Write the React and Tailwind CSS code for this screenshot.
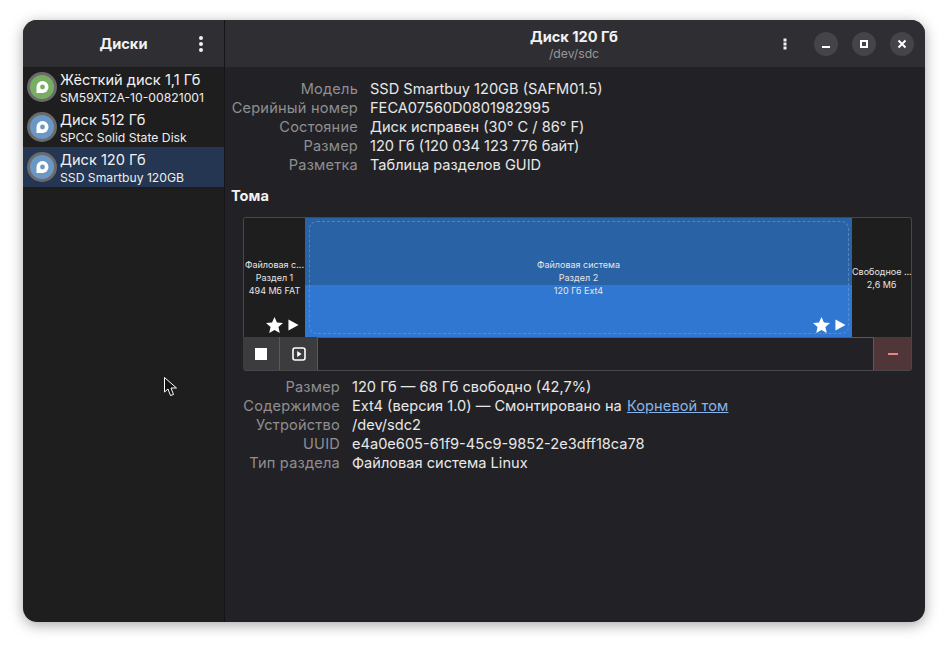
// App.jsx
// Disks window, dark theme

function DiskIcon({ color }) {
  return (
    <svg width="30" height="30" viewBox="0 0 30 30" className="shrink-0">
      <circle cx="15" cy="15" r="15" fill="#6b6b6b" />
      <circle cx="15" cy="15" r="12" fill={color} />
      <path d="M15.5 9a6 6 0 0 1 0 12H9.5v-6a6 6 0 0 1 6-6z" fill="#fff" />
      <circle cx="15.5" cy="15" r="2.4" fill={color} />
    </svg>
  );
}

function DiskRow({ name, model, color, selected }) {
  return (
    <div className={`flex h-10 items-center gap-[3px] pl-[4px] ${selected ? 'bg-[#243651]' : ''}`}>
      <DiskIcon color={color} />
      <div className="flex flex-col">
        <span className="text-[14.6px] leading-[20px] text-[#f2f2f2]">{name}</span>
        <span className="text-[12.2px] leading-[15px] text-[#eeeeee]">{model}</span>
      </div>
    </div>
  );
}

function InfoRows({ rows, labelWidth }) {
  return (
    <div className="grid gap-x-3" style={{ gridTemplateColumns: `${labelWidth}px 1fr` }}>
      {rows.map(([label, value]) => (
        <div key={label} className="contents">
          <span className="h-[19px] whitespace-nowrap text-right text-[14.6px] leading-[19px] tracking-[0.2px] text-[#8f8f91]">{label}</span>
          <span className="h-[19px] text-[14.6px] leading-[19px] text-[#e8e8e8]">{value}</span>
        </div>
      ))}
    </div>
  );
}

function WinButton({ children }) {
  return (
    <div className="flex h-6 w-6 items-center justify-center rounded-full bg-[#454549]">
      {children}
    </div>
  );
}

function StarPlay() {
  return (
    <div className="absolute bottom-[4px] right-[6px] flex items-center gap-[5px]">
      <svg width="17" height="16" viewBox="0 0 18 17">
        <path d="M9 0l2.6 5.8 6.4.7-4.8 4.2 1.4 6.3L9 13.8 3.4 17l1.4-6.3L0 6.5l6.4-.7z" fill="#fff" />
      </svg>
      <svg width="11" height="12" viewBox="0 0 12 13">
        <path d="M0.5 0.5L11.5 6.5L0.5 12.5z" fill="#fff" />
      </svg>
    </div>
  );
}

function SegLabel({ lines }) {
  return (
    <div className="flex w-full flex-col items-center text-center text-[9px] leading-[13px] text-[#e6e6e6]">
      {lines.map((l) => (
        <span key={l} className="block w-full whitespace-nowrap">{l}</span>
      ))}
    </div>
  );
}

export default function App() {
  return (
    <div className="relative h-[648px] w-[948px] overflow-hidden bg-white pl-[23px] pt-[20px] font-['Inter',sans-serif]">
      <div className="flex h-[602px] w-[902px] overflow-hidden rounded-[14px] shadow-[0_3px_14px_rgba(0,0,0,0.35)]">
        {/* Sidebar */}
        <div className="flex w-[202px] shrink-0 flex-col border-r border-[#151517] bg-[#1e1e1f]">
          <div className="relative flex h-[47px] shrink-0 items-center justify-center bg-[#2f2f33] pt-[2px]">
            <span className="text-[14.6px] font-bold text-[#f2f2f2]">Диски</span>
            <svg width="4" height="16" viewBox="0 0 4 16" className="absolute left-[176px] top-[16px]">
              <circle cx="2" cy="2" r="2" fill="#f0f0f0" />
              <circle cx="2" cy="8" r="2" fill="#f0f0f0" />
              <circle cx="2" cy="14" r="2" fill="#f0f0f0" />
            </svg>
          </div>
          <div className="flex flex-col">
            <DiskRow name="Жёсткий диск 1,1 Гб" model="SM59XT2A-10-00821001" color="#78ae64" />
            <DiskRow name="Диск 512 Гб" model="SPCC Solid State Disk" color="#6b97c4" />
            <DiskRow name="Диск 120 Гб" model="SSD Smartbuy 120GB" color="#6b97c4" selected />
          </div>
        </div>

        {/* Main */}
        <div className="flex min-w-0 flex-1 flex-col bg-[#222226]">
          <div className="relative flex h-[47px] shrink-0 flex-col items-center justify-center bg-[#2f2f33] pr-[2px] pt-[1px]">
            <span className="text-[14.6px] font-bold leading-[18px] text-[#f2f2f2]">Диск 120 Гб</span>
            <span className="text-[12.2px] leading-[15px] text-[#98989a]">/dev/sdc</span>
            <div className="absolute right-[11px] top-[12px] flex items-center gap-[14px]">
              <svg width="4" height="12" viewBox="0 0 4 12" className="mr-[13px]">
                <rect x="0.5" y="0.5" width="3" height="3" fill="#f0f0f0" />
                <rect x="0.5" y="4.5" width="3" height="3" fill="#f0f0f0" />
                <rect x="0.5" y="8.5" width="3" height="3" fill="#f0f0f0" />
              </svg>
              <WinButton>
                <div className="mt-[5px] h-[2px] w-2 bg-white" />
              </WinButton>
              <WinButton>
                <div className="h-2 w-2 border-2 border-white" />
              </WinButton>
              <WinButton>
                <svg width="10" height="10" viewBox="0 0 10 10">
                  <path d="M1.5 1.5l7 7M8.5 1.5l-7 7" stroke="#fff" strokeWidth="2" />
                </svg>
              </WinButton>
            </div>
          </div>

          <div className="flex flex-col pl-[6px] pr-[13px] pt-[13px]">
            <InfoRows
              labelWidth={127}
              rows={[
                ['Модель', 'SSD Smartbuy 120GB (SAFM01.5)'],
                ['Серийный номер', 'FECA07560D0801982995'],
                ['Состояние', 'Диск исправен (30° C / 86° F)'],
                ['Размер', '120 Гб (120 034 123 776 байт)'],
                ['Разметка', 'Таблица разделов GUID'],
              ]}
            />

            <div className="mt-[12px] h-[19px] text-[14.6px] font-bold leading-[19px] text-[#f2f2f2]">Тома</div>

            {/* Volume map */}
            <div className="ml-[12px] mt-[11px] flex flex-col">
              <div className="flex h-[120px] overflow-hidden rounded-t-[3px] border-x border-t border-[#47474a]">
                <div className="relative flex w-[61px] shrink-0 items-center bg-[#1e1e1f]">
                  <SegLabel lines={['Файловая с...', 'Раздел 1', '494 Мб FAT']} />
                  <StarPlay />
                </div>
                <div className="relative flex flex-1 items-center bg-[#2f77d1]">
                  <div className="absolute inset-x-0 top-0 h-[67px] bg-[#2a62a6]" />
                  <div className="absolute bottom-[3px] left-[4px] right-[3px] top-[3px] rounded-[8px] border border-dashed border-[#7aa6da]/50" />
                  <div className="relative w-full">
                    <SegLabel lines={['Файловая система', 'Раздел 2', '120 Гб Ext4']} />
                  </div>
                  <StarPlay />
                </div>
                <div className="flex w-[59px] shrink-0 items-center bg-[#1e1e1f]">
                  <SegLabel lines={['Свободное ...', '2,6 Мб']} />
                </div>
              </div>
              <div className="flex h-[34px] overflow-hidden rounded-b-[3px] border-b border-[#47474a]">
                <div className="flex w-[37px] items-center justify-center border-r border-[#5a5a5c] bg-[#3c3c3f]">
                  <div className="h-3 w-3 bg-white" />
                </div>
                <div className="flex w-[37px] items-center justify-center bg-[#3c3c3f]">
                  <svg width="14" height="14" viewBox="0 0 14 14">
                    <rect x="1" y="1" width="12" height="12" rx="2" fill="none" stroke="#fff" strokeWidth="1.6" />
                    <path d="M5.2 4l4.4 3-4.4 3z" fill="#fff" />
                  </svg>
                </div>
                <div className="flex-1 border-l border-t border-r border-[#5a5a5c] bg-[#222226]" />
                <div className="flex w-[38px] items-center justify-center border-r border-[#47474a] bg-[#503638]">
                  <div className="h-[2px] w-[10px] bg-[#e5848a]" />
                </div>
              </div>
            </div>

            <div className="ml-[12px] mt-[7px]">
              <InfoRows
                labelWidth={97}
                rows={[
                  ['Размер', '120 Гб — 68 Гб свободно (42,7%)'],
                  [
                    'Содержимое',
                    <>
                      Ext4 (версия 1.0) — Смонтировано на{' '}
                      <span className="ml-[1px] tracking-[0.1px] text-[#8ab4e8] underline">Корневой том</span>
                    </>,
                  ],
                  ['Устройство', '/dev/sdc2'],
                  ['UUID', 'e4a0e605-61f9-45c9-9852-2e3dff18ca78'],
                  ['Тип раздела', 'Файловая система Linux'],
                ]}
              />
            </div>
          </div>
        </div>
      </div>

      {/* Mouse pointer */}
      <svg width="14" height="21" viewBox="0 0 14 21" className="absolute left-[164px] top-[377px]">
        <path d="M0.5 0.5L0.5 15L4 12L6.5 18.5L9.5 17.5L7 11L12.5 11z" fill="#111" stroke="#fff" strokeWidth="1" />
      </svg>
    </div>
  );
}
